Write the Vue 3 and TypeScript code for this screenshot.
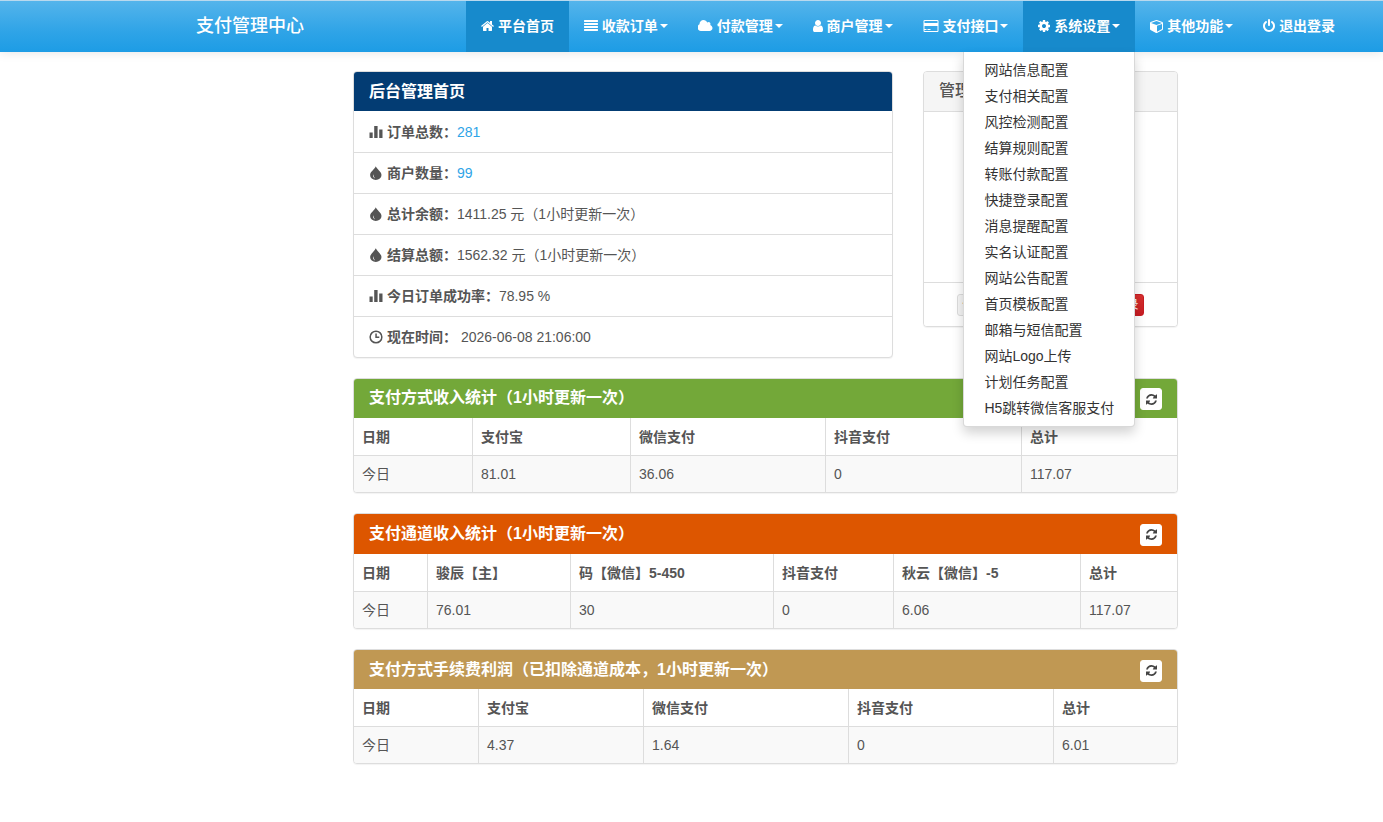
<script setup lang="ts">
interface NavItem {
  label: string
  icon: string
  caret?: boolean
  active?: boolean
  menu?: string[]
}

interface StatRow {
  icon: string
  label: string
  value: string
  link?: boolean
  gap?: boolean
}

interface StatTable {
  title: string
  tone: string
  columns: number[]
  head: string[]
  row: string[]
}

// x / w are in the 1792 unit grid the paths are drawn on, 128 units = 1px at 14px
const navIcons: Record<string, { x: number; w: number; d: string }> = {
  home: {
    x: 64,
    w: 1664,
    d: 'M1472 992v480q0 26-19 45t-45 19h-384v-384h-256v384h-384q-26 0-45-19t-19-45v-480q0-1 .5-3t.5-3l575-474 575 474q1 2 1 6zm223-69l-62 74q-8 9-21 11h-3q-13 0-21-7l-692-577-692 577q-12 8-24 7-13-2-21-11l-62-74q-8-10-7-23.5t11-21.5l719-599q32-26 76-26t76 26l244 204v-195q0-14 9-23t23-9h192q14 0 23 9t9 23v408l219 182q10 8 11 21.5t-7 23.5z'
  },
  list: {
    x: 0,
    w: 1792,
    d: 'M1792 1344v128q0 26-19 45t-45 19h-1664q-26 0-45-19t-19-45v-128q0-26 19-45t45-19h1664q26 0 45 19t19 45zm0-384v128q0 26-19 45t-45 19h-1664q-26 0-45-19t-19-45v-128q0-26 19-45t45-19h1664q26 0 45 19t19 45zm0-384v128q0 26-19 45t-45 19h-1664q-26 0-45-19t-19-45v-128q0-26 19-45t45-19h1664q26 0 45 19t19 45zm0-384v128q0 26-19 45t-45 19h-1664q-26 0-45-19t-19-45v-128q0-26 19-45t45-19h1664q26 0 45 19t19 45z'
  },
  cloud: {
    x: 0,
    w: 1920,
    d: 'M1856 1152q0 159-112.5 271.5t-271.5 112.5h-1088q-185 0-316.5-131.5t-131.5-316.5q0-132 71-241.5t187-163.5q-2-28-2-43 0-212 150-362t362-150q158 0 286.5 88t187.5 230q70-62 166-62 106 0 181 75t75 181q0 75-41 138 129 30 213 134.5t84 239.5z'
  },
  user: {
    x: 256,
    w: 1280,
    d: 'M1536 1399q0 109-62.5 187t-150.5 78h-854q-88 0-150.5-78t-62.5-187q0-85 8.5-160.5t31.5-152 58.5-131 94-89 134.5-34.5q131 128 313 128t313-128q76 0 134.5 34.5t94 89 58.5 131 31.5 152 8.5 160.5zm-256-887q0 159-112.5 271.5t-271.5 112.5-271.5-112.5-112.5-271.5 112.5-271.5 271.5-112.5 271.5 112.5 112.5 271.5z'
  },
  card: {
    x: -64,
    w: 2048,
    d: 'M1760 128q66 0 113 47t47 113v1216q0 66-47 113t-113 47h-1600q-66 0-113-47t-47-113v-1216q0-66 47-113t113-47h1600zm-1600 128q-13 0-22.5 9.5t-9.5 22.5v224h1664v-224q0-13-9.5-22.5t-22.5-9.5h-1600zm1600 1280q13 0 22.5-9.5t9.5-22.5v-608h-1664v608q0 13 9.5 22.5t22.5 9.5h1600zm-1632-128v-128h256v128h-256zm384 0v-128h384v128h-384z'
  },
  cog: {
    x: 128,
    w: 1536,
    d: 'M1152 896q0-106-75-181t-181-75-181 75-75 181 75 181 181 75 181-75 75-181zm512-109v222q0 12-8 23t-20 13l-185 28q-19 54-39 91 35 50 107 138 10 12 10 25t-9 23q-27 37-99 108t-94 71q-12 0-26-9l-138-108q-44 23-91 38-16 136-29 186-7 28-36 28h-222q-14 0-24.5-8.5t-11.5-21.5l-28-184q-49-16-90-37l-141 107q-10 9-25 9-14 0-25-11-126-114-165-168-7-10-7-23 0-12 8-23 15-21 51-66.5t54-70.5q-27-50-41-99l-183-27q-13-2-21-12.5t-8-23.5v-222q0-12 8-23t19-13l186-28q14-46 39-92-40-57-107-138-10-12-10-24 0-10 9-23 26-36 98.5-107.5t94.5-71.5q13 0 26 10l138 107q44-23 91-38 16-136 29-186 7-28 36-28h222q14 0 24.5 8.5t11.5 21.5l28 184q49 16 90 37l142-107q9-9 24-9 13 0 25 10 129 119 165 170 7 8 7 22 0 12-8 23-15 21-51 66.5t-54 70.5q26 50 41 98l183 28q13 2 21 12.5t8 23.5z'
  },
  box: {
    x: 0,
    w: 1664,
    d: 'M896 1629l640-349v-636l-640 233v752zm-64-865l698-254-698-254-698 254zm832-252v768q0 35-18 65t-49 47l-704 384q-28 16-61 16t-61-16l-704-384q-31-17-49-47t-18-65v-768q0-40 23-73t61-47l704-256q22-8 44-8t44 8l704 256q38 14 61 47t23 73z'
  },
  off: {
    x: 128,
    w: 1536,
    d: 'M1664 896q0 156-61 298t-164 245-245 164-298 61-298-61-245-164-164-245-61-298q0-182 80.5-343t226.5-270q43-32 95.5-25t83.5 50q32 42 24.5 94.5t-49.5 84.5q-98 74-151.5 181t-53.5 228q0 104 40.5 198.5t109.5 163.5 163.5 109.5 198.5 40.5 198.5-40.5 163.5-109.5 109.5-163.5 40.5-198.5q0-121-53.5-228t-151.5-181q-42-32-49.5-84.5t24.5-94.5q31-43 84-50t95 25q146 109 226.5 270t80.5 343zm-640-768v640q0 52-38 90t-90 38-90-38-38-90v-640q0-52 38-90t90-38 90 38 38 90z'
  }
}

const navItems: NavItem[] = [
  { label: '平台首页', icon: 'home', active: true },
  { label: '收款订单', icon: 'list', caret: true },
  { label: '付款管理', icon: 'cloud', caret: true },
  { label: '商户管理', icon: 'user', caret: true },
  { label: '支付接口', icon: 'card', caret: true },
  {
    label: '系统设置',
    icon: 'cog',
    caret: true,
    active: true,
    menu: [
      '网站信息配置',
      '支付相关配置',
      '风控检测配置',
      '结算规则配置',
      '转账付款配置',
      '快捷登录配置',
      '消息提醒配置',
      '实名认证配置',
      '网站公告配置',
      '首页模板配置',
      '邮箱与短信配置',
      '网站Logo上传',
      '计划任务配置',
      'H5跳转微信客服支付'
    ]
  },
  { label: '其他功能', icon: 'box', caret: true },
  { label: '退出登录', icon: 'off' }
]

// full-width punctuation, written as escapes so it stays full-width
const COLON = '\uFF1A'
const LP = '\uFF08'
const RP = '\uFF09'
const COMMA = '\uFF0C'

const statRows: StatRow[] = [
  { icon: 'bars', label: '订单总数' + COLON, value: '281', link: true },
  { icon: 'drop', label: '商户数量' + COLON, value: '99', link: true },
  { icon: 'drop', label: '总计余额' + COLON, value: `1411.25 元${LP}1小时更新一次${RP}` },
  { icon: 'drop', label: '结算总额' + COLON, value: `1562.32 元${LP}1小时更新一次${RP}` },
  { icon: 'bars', label: '今日订单成功率' + COLON, value: '78.95 %' },
  { icon: 'clock', label: '现在时间' + COLON, value: '2026-06-08 21:06:00', gap: true }
]

const tables: StatTable[] = [
  {
    title: `支付方式收入统计${LP}1小时更新一次${RP}`,
    tone: 'green',
    columns: [118, 158, 195, 196, 156],
    head: ['日期', '支付宝', '微信支付', '抖音支付', '总计'],
    row: ['今日', '81.01', '36.06', '0', '117.07']
  },
  {
    title: `支付通道收入统计${LP}1小时更新一次${RP}`,
    tone: 'orange',
    columns: [73, 143, 203, 120, 187, 97],
    head: ['日期', '骏辰【主】', '码【微信】5-450', '抖音支付', '秋云【微信】-5', '总计'],
    row: ['今日', '76.01', '30', '0', '6.06', '117.07']
  },
  {
    title: `支付方式手续费利润${LP}已扣除通道成本${COMMA}1小时更新一次${RP}`,
    tone: 'tan',
    columns: [124, 165, 205, 205, 124],
    head: ['日期', '支付宝', '微信支付', '抖音支付', '总计'],
    row: ['今日', '4.37', '1.64', '0', '6.01']
  }
]
</script>

<template>
  <div class="page">
    <header class="navbar">
      <a class="brand">支付管理中心</a>
      <ul class="nav">
        <li v-for="item in navItems" :key="item.label" class="nav-item" :class="{ active: item.active }">
          <a class="nav-link">
            <svg
              class="nav-icon"
              :viewBox="`${navIcons[item.icon].x} 0 ${navIcons[item.icon].w} 1792`"
              :style="{ width: navIcons[item.icon].w / 128 + 'px' }"
              fill="currentColor"
            >
              <path :d="navIcons[item.icon].d" />
            </svg>
            <span>{{ item.label }}</span>
            <i v-if="item.caret" class="caret"></i>
          </a>
          <ul v-if="item.menu" class="dropdown">
            <li v-for="entry in item.menu" :key="entry" class="dropdown-item">{{ entry }}</li>
          </ul>
        </li>
      </ul>
    </header>

    <main class="content">
      <div class="top-row">
        <section class="panel">
          <div class="panel-heading navy">后台管理首页</div>
          <ul class="stat-list">
            <li v-for="row in statRows" :key="row.label" class="stat-row">
              <svg class="stat-icon" viewBox="0 0 14 14" fill="currentColor">
                <path v-if="row.icon === 'bars'" d="M.5 7.500h3.200V13H.5V7.500ZM5.200 1h3.400v12H5.200V1ZM10.200 4.500h3.300V13h-3.300V4.500Z" />
                <path
                  v-else-if="row.icon === 'drop'"
                  fill-rule="evenodd"
                  d="M6.800.3c.8 2.700 5.700 5.500 5.700 8.700a5.700 4.900 0 0 1-11.400 0C1.100 5.800 6 3 6.800.3ZM4.200 8.200C3.500 10 4.400 11.700 6.200 12.400 5 11.200 4.600 10 4.200 8.200Z"
                />
                <path
                  v-else
                  fill-rule="evenodd"
                  d="M7 .4a6.600 6.600 0 1 1 0 13.200A6.600 6.600 0 0 1 7 .4Zm0 1.500a5.100 5.100 0 1 0 0 10.200A5.100 5.100 0 0 0 7 1.900ZM6.300 3.400h1.500v3.200h2.500v1.500h-4V3.400Z"
                />
              </svg>
              <b class="stat-label">{{ row.label }}</b>
              <span :class="{ 'stat-link': row.link, 'stat-gap': row.gap }">{{ row.value }}</span>
            </li>
          </ul>
        </section>

        <section class="panel">
          <div class="panel-heading plain">管理员信息</div>
          <div class="side-body"></div>
          <div class="side-footer">
            <a class="btn btn-default">修改资料</a>
            <a class="btn btn-default">修改密码</a>
            <a class="btn btn-danger">退出登录</a>
          </div>
        </section>
      </div>

      <section v-for="table in tables" :key="table.tone" class="panel">
        <div class="panel-heading table-heading" :class="table.tone">
          <span>{{ table.title }}</span>
          <button class="refresh" type="button">
            <svg viewBox="128 0 1536 1792" fill="#444444">
              <path d="M1639 1056q0 5-1 7-64 268-268 434.5t-478 166.5q-146 0-282.5-55t-243.5-157l-129 129q-19 19-45 19t-45-19-19-45v-448q0-26 19-45t45-19h448q26 0 45 19t19 45-19 45l-137 137q71 66 161 102t187 36q134 0 250-65t186-179q11-17 53-117 8-23 30-23h192q13 0 22.5 9.5t9.5 22.500zm25-800v448q0 26-19 45t-45 19h-448q-26 0-45-19t-19-45 19-45l138-138q-148-137-349-137-134 0-250 65t-186 179q-11 17-53 117-8 23-30 23h-199q-13 0-22.5-9.5t-9.5-22.500v-7q65-268 270-434.5t480-166.5q146 0 284 55.5t245 156.5l130-129q19-19 45-19t45 19 19 45z" />
            </svg>
          </button>
        </div>
        <table class="stat-table">
          <colgroup>
            <col v-for="(w, i) in table.columns" :key="i" :style="{ width: w + 'px' }" />
          </colgroup>
          <thead>
            <tr>
              <th v-for="h in table.head" :key="h">{{ h }}</th>
            </tr>
          </thead>
          <tbody>
            <tr>
              <td v-for="(c, i) in table.row" :key="i">{{ c }}</td>
            </tr>
          </tbody>
        </table>
      </section>
    </main>
  </div>
</template>

<style scoped>
.page {
  min-height: 822px;
  background: #ffffff;
  color: #555555;
  font-family: "Liberation Sans", "Noto Sans CJK SC", sans-serif;
  font-size: 14px;
  line-height: 20px;
}

ul {
  list-style: none;
  margin: 0;
  padding: 0;
}

.navbar {
  display: flex;
  align-items: stretch;
  height: 52px;
  box-sizing: border-box;
  border-top: 1px solid #b9d9ee;
  background: linear-gradient(to bottom, #54b4eb 0%, #2fa4e7 60%, #1d9ce5 100%);
  box-shadow: 0 1px 10px rgba(0, 0, 0, 0.1);
  color: #ffffff;
  position: relative;
}

.brand {
  margin-left: 196px;
  font-size: 18px;
  line-height: 50px;
  font-weight: 500;
  text-shadow: 0 1px 0 rgba(0, 0, 0, 0.05);
}

.nav {
  display: flex;
  margin-left: 162px;
}

.nav-item {
  position: relative;
}

.nav-item.active {
  background: #178acc;
}

.nav-link {
  display: flex;
  align-items: center;
  height: 49px;
  padding: 0 15px;
  font-weight: 700;
  font-size: 14px;
  color: #ffffff;
  text-shadow: 0 1px 0 rgba(0, 0, 0, 0.05);
}

.nav-icon {
  height: 14px;
  margin-right: 3.9px;
  flex: none;
}

.caret {
  width: 0;
  height: 0;
  margin-left: 2px;
  border-top: 4px solid #ffffff;
  border-left: 4px solid transparent;
  border-right: 4px solid transparent;
}

.dropdown {
  position: absolute;
  top: 100%;
  right: 0;
  z-index: 10;
  min-width: 160px;
  padding: 5px 0;
  background: #ffffff;
  border: 1px solid rgba(0, 0, 0, 0.15);
  border-top: 0;
  border-radius: 0 0 4px 4px;
  box-shadow: 0 6px 12px rgba(0, 0, 0, 0.175);
  white-space: nowrap;
}

.dropdown-item {
  padding: 3px 20px;
  color: #333333;
  font-weight: 400;
}

.content {
  width: 825px;
  margin-left: 353px;
  padding-top: 19px;
}

.top-row {
  display: grid;
  grid-template-columns: 540px 255px;
  column-gap: 30px;
  align-items: start;
}

.panel {
  margin-bottom: 20px;
  background: #ffffff;
  border: 1px solid #dddddd;
  border-radius: 4px;
  box-shadow: 0 1px 1px rgba(0, 0, 0, 0.05);
  overflow: hidden;
}

.panel-heading {
  display: flex;
  align-items: center;
  box-sizing: border-box;
  height: 39.6px;
  padding: 0 15px;
  font-size: 16px;
  font-weight: 700;
  line-height: 20px;
  color: #ffffff;
}

.navy {
  height: 39px;
  background: #033c73;
}

.plain {
  background: #f5f5f5;
  color: #555555;
  font-weight: 500;
  border-bottom: 1px solid #dddddd;
}

.green {
  background: #73a839;
}

.orange {
  background: #dd5600;
}

.tan {
  background: #c09853;
}

.table-heading {
  justify-content: space-between;
}

.refresh {
  display: flex;
  align-items: center;
  justify-content: center;
  width: 22px;
  height: 22px;
  padding: 0;
  margin-top: 2px;
  background: #ffffff;
  border: 1px solid #ffffff;
  border-radius: 3px;
}

.refresh svg {
  width: 11px;
  height: 13px;
}

.stat-row {
  display: flex;
  align-items: center;
  height: 40px;
  padding: 0 15px;
  border-bottom: 1px solid #dddddd;
}

.stat-row:first-child {
  height: 39.6px;
  padding-top: 1px;
}

.stat-row:last-child {
  border-bottom: 0;
}

.stat-icon {
  width: 14px;
  height: 14px;
  margin-right: 3.9px;
  flex: none;
}

.stat-label {
  font-weight: 700;
}

.stat-link {
  color: #2fa4e7;
}

.stat-gap {
  margin-left: 4px;
}

.side-body {
  height: 170px;
}

.side-footer {
  display: flex;
  justify-content: center;
  gap: 3.9px;
  padding: 11px 15px 10px;
  background: #ffffff;
  border-top: 1px solid #dddddd;
}

.btn {
  padding: 0 5px;
  font-size: 12px;
  line-height: 20px;
  border-radius: 3px;
}

.btn-default {
  background: #f5f5f5;
  border: 1px solid #dddddd;
}

.btn-danger {
  background: linear-gradient(to bottom, #d9302f, #c71c22);
  border: 1px solid #c71c22;
  color: #ffffff;
}

.stat-table {
  width: 100%;
  border-collapse: separate;
  border-spacing: 0;
  table-layout: fixed;
}

.stat-table th,
.stat-table td {
  padding: 8px;
  border-left: 1px solid #dddddd;
  text-align: left;
  line-height: 20px;
}

.stat-table tr > :first-child {
  border-left: 0;
}

.stat-table thead th {
  padding-top: 9px;
  border-bottom: 1px solid #dddddd;
  font-weight: 700;
}

.stat-table tbody td {
  background: #f9f9f9;
}
</style>

<style>
html,
body {
  margin: 0;
  background: #ffffff;
}
</style>
